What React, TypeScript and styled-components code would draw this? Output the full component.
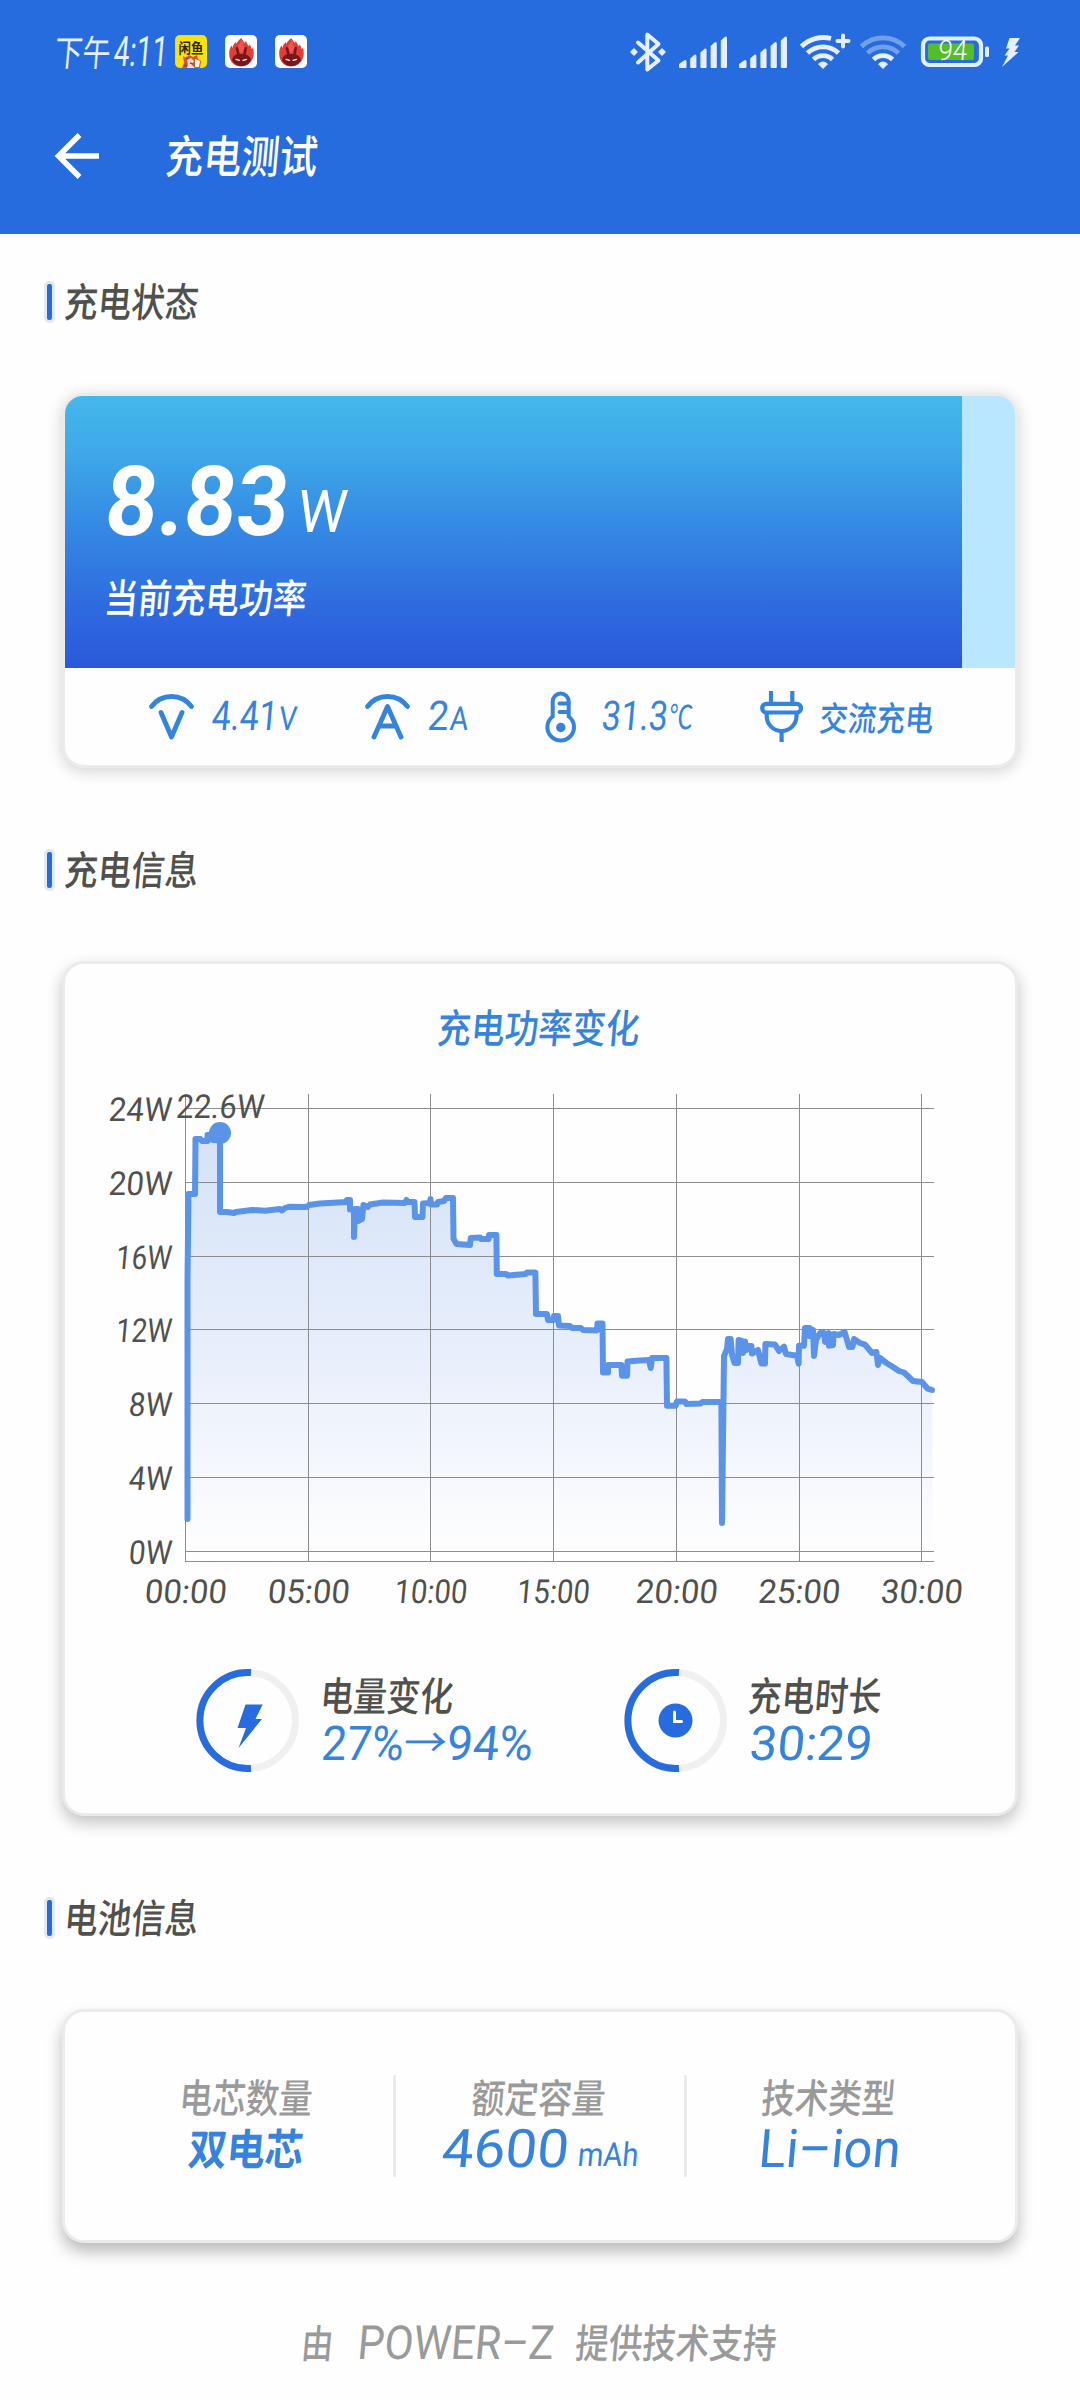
import React, { useLayoutEffect, useRef, useState } from "react";
import styled, { createGlobalStyle } from "styled-components";

const BLUE = "#266cdf";
const ACCENT = "#3683de";
const DARK = "#50514d";
const GREY = "#9a9a9a";
const LINE = "#5b93e9";
const FONT = `Roboto, "Noto Sans CJK SC", sans-serif`;

const GlobalStyle = createGlobalStyle`
  * { box-sizing: border-box; }
  html, body { margin: 0; padding: 0; background: #fefefe; }
  body { font-family: ${FONT}; }
  svg { display: block; flex: none; overflow: visible; }
`;

/* Condensed, slightly slanted lettering stretched to a set width. */
const FitBox = styled.span<{ $w: number; $h: number }>`
  display: flex;
  flex: none;
  width: ${(p) => p.$w}px;
  height: ${(p) => p.$h}px;
`;
const FitInner = styled.span<{ $h: number; $size: number; $weight: number; $color: string }>`
  flex: none;
  white-space: nowrap;
  transform-origin: left center;
  line-height: ${(p) => p.$h}px;
  font-size: ${(p) => p.$size}px;
  font-weight: ${(p) => p.$weight};
  color: ${(p) => p.$color};
`;

type FitProps = { text: string; w: number; h: number; size: number; weight?: number; color: string };

function Fit({ text, w, h, size, weight = 400, color }: FitProps) {
  const ref = useRef<HTMLSpanElement>(null);
  const [k, setK] = useState(1);
  useLayoutEffect(() => {
    if (ref.current) setK(w / ref.current.offsetWidth);
  }, [w, text]);
  const shift = /[\u4e00-\u9fff]/.test(text) ? "translate(-1.5px, 1.5px) " : "";
  return (
    <FitBox $w={w} $h={h}>
      <FitInner
        ref={ref}
        $h={h}
        $size={size}
        $weight={weight}
        $color={color}
        style={{ transform: `${shift}skewX(-5deg) scaleX(${k})` }}
      >
        {text}
      </FitInner>
    </FitBox>
  );
}

const Page = styled.div`
  width: 1080px;
  height: 2400px;
  background: #fefefe;
  overflow: hidden;
`;
const Header = styled.header`
  height: 234px;
  background: ${BLUE};
`;
const StatusBar = styled.div`
  display: flex;
  align-items: center;
  height: 103px;
  padding: 0 60px 0 56px;
`;
const Clock = styled.div`
  display: flex;
  align-items: center;
  gap: 2px;
  width: 119px;
`;
const AppIcons = styled.div`
  display: flex;
  gap: 18px;
`;
const Indicators = styled.div`
  display: flex;
  align-items: center;
  gap: 12px;
  margin-left: auto;
`;
const TitleBar = styled.div`
  display: flex;
  align-items: center;
  gap: 67px;
  height: 106px;
  padding-left: 55px;
`;

const Content = styled.main`
  display: flex;
  flex-direction: column;
`;
const SectionHead = styled.div<{ $top: number }>`
  display: flex;
  align-items: center;
  gap: 11px;
  height: 42px;
  margin: ${(p) => p.$top}px 0 70px 44px;
`;
const Marker = styled.i`
  width: 11px;
  height: 42px;
  border: 3px solid #e4e8ef;
  border-radius: 5px;
  background: ${BLUE};
`;
const Card = styled.section<{ $h: number; $depth: number }>`
  width: 956px;
  height: ${(p) => p.$h}px;
  margin-left: 62px;
  border: 3px solid #ebebeb;
  border-radius: 22px;
  background: #fefefe;
  box-shadow: 0 ${(p) => p.$depth}px 16px rgba(0, 0, 0, ${(p) => 0.14 + p.$depth * 0.014});
`;

const Level = styled.div`
  height: 272px;
  border-radius: 18px 18px 0 0;
  background: #b8e7ff;
  overflow: hidden;
`;
const LevelFill = styled.div`
  display: flex;
  flex-direction: column;
  width: 897px;
  height: 272px;
  padding: 71px 0 0 41px;
  background: linear-gradient(#44b8ec 0%, #3fa9e9 20%, #3487e3 50%, #2e6bdf 77%, #2b58db 100%);
`;
const Power = styled.div`
  display: flex;
  align-items: flex-end;
  gap: 9px;
  height: 70px;
  margin-bottom: 37px;
`;
const PowerUnit = styled.div`
  padding-bottom: 4px;
`;
const Metrics = styled.div`
  display: grid;
  grid-template-columns: 216px 180px 215px 1fr;
  align-items: center;
  height: 97px;
  padding: 0 0 0 84px;
`;
const Metric = styled.div<{ $gap: number }>`
  display: flex;
  align-items: center;
  gap: ${(p) => p.$gap}px;
`;
const Reading = styled.div`
  display: flex;
  align-items: flex-end;
  gap: 1px;
`;

const ChartTitle = styled.div`
  display: flex;
  justify-content: center;
  padding-top: 40px;
  margin-bottom: 8px;
`;
const Stats = styled.div`
  display: grid;
  grid-template-columns: 428px 1fr;
  padding: 49px 0 0 131px;
`;
const Stat = styled.div`
  display: flex;
  gap: 23px;
`;
const Stack = styled.div`
  display: flex;
  flex-direction: column;
  padding-top: 3px;
`;
const ValueSlot = styled.div`
  display: flex;
  align-items: center;
  height: 48px;
`;

const Specs = styled.div`
  display: grid;
  grid-template-columns: 295px 291px 286px;
  padding: 63px 0 0 36px;
`;
const Spec = styled.div<{ $last?: boolean }>`
  display: flex;
  flex-direction: column;
  align-items: center;
  height: 102px;
  border-right: ${(p) => (p.$last ? "none" : "3px solid #ebebeb")};
`;
const SpecValue = styled.div`
  display: flex;
  align-items: flex-end;
  gap: 9px;
  height: 42px;
  margin-top: 6px;
  padding-bottom: 1px;
`;
const Footer = styled.footer`
  display: flex;
  justify-content: center;
  align-items: center;
  gap: 23px;
  height: 50px;
  margin-top: 75px;
`;

const FishIcon = () => (
  <svg width="32" height="33" viewBox="0 0 32 33">
    <rect width="32" height="33" rx="5" fill="#fbe20f" />
    <text x="3.5" y="17.5" fontSize="13.5" fontWeight="700" textLength="25" lengthAdjust="spacingAndGlyphs" fill="#2a2410">闲鱼</text>
    <path d="M8 21l3 2 3-3 4 2 4-2 1 4 3 2-1 7H7l2-5z" fill="#d9542b" />
    <path d="M12 25l4-2 3 3-2 4 3 3h-8l1-4z" fill="#f7dcc0" />
    <path d="M20 24l5 2-1 6h-4z" fill="#fff7e8" />
    <path d="M11 22l2 2M15 28l3 1M9 30l3 1" stroke="#713fa0" strokeWidth="1.4" />
  </svg>
);

const FlameIcon = () => (
  <svg width="32" height="33" viewBox="0 0 32 33">
    <rect width="32" height="33" rx="5" fill="#fff" />
    <path d="M4.200 19C4 15 5 13 6.500 10.500L7.500 13C8 10 9 8.500 11 7L11.500 9C12.500 6 14 5 16.500 3C17 5 18.500 6 19.500 8L21 6C21.500 8 22.500 9 23.500 11L25 9.500C25.500 11 26 12 26.500 14L28 13C30 20 28 26 23 29.500C18 32.500 12 32 8 28.500C5.500 26 4.300 23 4.200 19Z" fill="#df3e39" />
    <path d="M13 11L17 5L19 13L17 18L14 17Z" fill="#f0574c" />
    <path d="M7 25C8 21 10.500 19.500 12 19.300L10.500 13C11 11.500 12.500 11.500 13.300 13L14.800 19H18.200L19.500 13C20.300 11.500 22 11.500 22 13L20.800 19.400C23.500 20 25.500 22 26 25C24 29.500 20 31 16.500 31C13 31 9 29.500 7 25Z" fill="#7a1519" />
    <path d="M11 24.300l3.500 1M21.500 24.300l-3.500 1" stroke="#fff" strokeWidth="1.300" strokeLinecap="round" />
  </svg>
);

const PALE = "#e6effd";

const BluetoothIcon = () => (
  <svg width="37" height="40" viewBox="0 0 37 40" fill="none" stroke={PALE} strokeWidth="4" strokeLinejoin="round" strokeLinecap="round">
    <path d="M8 10.500L28.500 28.500L17.300 37.500V2.500L28.500 12L8 30.500" />
    <path d="M4 17l3 3-3 3-3-3zM32 17l3 3-3 3-3-3z" fill={PALE} strokeWidth="1.500" />
  </svg>
);

const SignalIcon = ({ box }: { box: number }) => (
  <svg width={box} height="32" viewBox={`0 0 ${box} 32`} fill={PALE}>
    {[8, 13.500, 19.500, 26, 31.500].map((h, i) => {
      const x = i === 0 ? 0 : 1 + i * 10.200;
      const w = i === 0 ? 7.500 : 6.200;
      const y = 32 - h;
      return <path key={i} d={`M${x} ${y + 4}L${x + w - 2} ${y + 0.300}Q${x + w} ${y - 0.500} ${x + w} ${y + 2}V31Q${x + w} 32 ${x + w - 1} 32H${x + 1}Q${x} 32 ${x} 31Z`} />;
    })}
  </svg>
);

const WifiIcon = ({ plus }: { plus?: boolean }) => (
  <svg width="48" height="35" viewBox="0 0 48 35" fill="none" stroke={PALE} strokeWidth="4.800">
    <path d={plus ? "M1.500 12.500A31 31 0 0 1 31 4.500" : "M1.500 12.500A31 31 0 0 1 44.500 12.500"} opacity={plus ? 1 : 0.4} />
    <path d="M7.500 19A22.500 22.500 0 0 1 38.500 19" opacity={plus ? 1 : 0.4} />
    <path d="M13.500 25.500A13.500 13.500 0 0 1 32.500 25.500" />
    <path d="M18.500 30Q23 26 27.500 30L23 34.500Z" fill={PALE} strokeWidth="1" strokeLinejoin="round" />
    {plus && <path d="M43 1.500V12.500M37.500 7H48.500" strokeWidth="4" strokeLinecap="round" />}
  </svg>
);

const BatteryIcon = () => (
  <svg width="70" height="31" viewBox="0 0 70 31">
    <rect x="3" y="2.500" width="58" height="26.500" rx="6.500" fill="none" stroke="#dff0fb" strokeWidth="4.200" />
    <rect x="8" y="7.500" width="46" height="16.500" rx="2" fill="#53bd2b" />
    <rect x="65" y="10.500" width="4" height="10.500" rx="1.500" fill="#dff0fb" />
    <text transform="translate(17.5 23.5) skewX(-5)" fontSize="28" fontWeight="300" textLength="29" lengthAdjust="spacingAndGlyphs" fill="#fff">94</text>
  </svg>
);

const ChargeIcon = () => (
  <svg width="18" height="30" viewBox="0 0 18 30">
    <path d="M7.500 1H18L13 8.500H17L12.500 15H16.500L0 30L6 18.500H2.500L7.500 11.500H4Z" fill={PALE} />
  </svg>
);

const BackIcon = () => (
  <svg width="45" height="46" viewBox="0 0 45 46" fill="none" stroke="#fff" strokeWidth="5.500">
    <path d="M24.500 2L3.500 23L24.500 44M4 23H44" />
  </svg>
);

const VoltIcon = () => (
  <svg width="45" height="47" viewBox="0 0 45 47" fill="none" stroke={ACCENT} strokeWidth="4.800" strokeLinecap="round" strokeLinejoin="round">
    <path d="M2.500 13.500A25 25 0 0 1 42.500 13.500M12 19.500L22.500 44L33 19.500" />
  </svg>
);

const AmpIcon = () => (
  <svg width="45" height="47" viewBox="0 0 45 47" fill="none" stroke={ACCENT} strokeWidth="4.800" strokeLinecap="round" strokeLinejoin="round">
    <path d="M2.500 13.500A25 25 0 0 1 42.500 13.500M9 44L22.500 13.500L36 44M14 33H31" />
  </svg>
);

const ThermoIcon = () => (
  <svg width="40" height="52" viewBox="0 0 40 52" fill="none" stroke={ACCENT} strokeWidth="4" strokeLinecap="round">
    <path d="M7.700 25.500V10.500A8 8 0 0 1 23.700 10.500V25.500A13.300 13.300 0 1 1 7.700 25.500ZM14.500 12.500H22M14.500 21H22" />
    <circle cx="15.800" cy="36.500" r="4.700" fill={ACCENT} stroke="none" />
  </svg>
);

const PlugIcon = () => (
  <svg width="44" height="52" viewBox="0 0 44 52" fill="none" stroke={ACCENT} strokeWidth="4.200">
    <path d="M11 0V12M32.300 0V12M21.600 40V51" />
    <rect x="2.200" y="12.800" width="38.800" height="8.700" rx="4.350" />
    <path d="M6.700 22V25A14.900 15 0 0 0 36.500 25V22" />
  </svg>
);

const Ring = ({ children }: { children: React.ReactNode }) => (
  <svg width="103" height="103" viewBox="0 0 103 103" fill="none">
    <circle cx="51.500" cy="51.500" r="48" stroke="#eff0f0" strokeWidth="7" />
    <path d="M55 3.600A48 48 0 1 0 55 99.400" stroke={BLUE} strokeWidth="7" />
    {children}
  </svg>
);

const SERIES: [number, number][] = [
  [187.5, 1519], [187.5, 1280], [188.5, 1194], [195, 1194], [195.5, 1139], [200.5, 1139], [202, 1141], [207.5, 1141], [207.5, 1135],
  [213, 1135], [213, 1140], [220, 1140], [220, 1212], [226.7, 1212], [234, 1213], [236, 1212], [252, 1210], [265, 1210.7], [280, 1209],
  [282, 1210.5], [285, 1208], [289, 1206.8], [306.7, 1207], [309, 1205], [320, 1203.5], [347, 1202], [347, 1200], [350, 1200],
  [350, 1209.500], [354, 1209.500], [354, 1237], [355, 1209], [358, 1209], [358, 1221], [362, 1219], [363.5, 1205], [368, 1207], [370, 1204.500],
  [383, 1202.500], [405, 1203], [406.5, 1200], [408, 1202], [414.500, 1202], [415, 1217], [422.500, 1217], [423, 1203.500], [430, 1203],
  [430.500, 1199], [431, 1204.600], [437, 1204.600], [438, 1202], [444, 1201], [446, 1198], [453, 1198], [453.500, 1238.600], [456.500, 1244],
  [470, 1245], [470.700, 1238], [480, 1237.500], [481, 1239], [488.600, 1239], [489, 1235], [496.400, 1235], [496.800, 1274], [506, 1274],
  [508, 1275.500], [525.700, 1274], [527, 1272.500], [535.400, 1272.500], [536, 1314], [547, 1314], [548, 1320], [553.600, 1320], [554, 1316],
  [558, 1316], [559, 1325.500], [570, 1326], [572, 1328], [581, 1328], [583, 1330], [597, 1330.400], [597.500, 1323.600], [602.500, 1323.600],
  [603, 1372.500], [608, 1372.500], [608, 1365], [621.400, 1365], [622, 1375.700], [627, 1375.700], [627.500, 1361.400], [636, 1360.700],
  [649, 1360], [650.700, 1368], [652, 1358], [666.400, 1358], [667, 1405.700], [675.700, 1405.700], [677, 1401.400], [685, 1401.400],
  [686.400, 1404], [700.700, 1403.600], [702.500, 1402], [721.400, 1402], [722, 1523], [724, 1356], [727, 1349], [728, 1339], [730.700, 1339],
  [732, 1354.600], [734.600, 1363], [738, 1363], [738.600, 1340], [742, 1341], [743, 1353], [745, 1341.500], [746.500, 1350], [748, 1346],
  [751.400, 1346], [752, 1353.600], [758, 1350], [761.400, 1363.600], [765, 1363.600], [765.400, 1344], [775, 1344.600], [779, 1351],
  [784, 1346.800], [786, 1354], [797, 1355.700], [798.600, 1363.600], [799, 1345.700], [804, 1345.700], [805, 1328], [809.600, 1328],
  [810, 1336], [813, 1330], [814, 1356], [816, 1340], [820, 1333], [824, 1333], [825, 1342], [828.600, 1333], [829, 1345.700], [833, 1345],
  [833.600, 1334], [839, 1335], [844.600, 1332], [846.400, 1338], [849, 1347], [852.500, 1347], [854, 1339], [860, 1343], [865, 1344.600],
  [872, 1353], [876.400, 1352], [878, 1365], [880, 1358], [886.500, 1363], [893, 1367], [899, 1371], [904, 1372.500], [913, 1381],
  [922, 1382], [927.500, 1388.600], [932, 1390],
];
const ROWS = [24, 20, 16, 12, 8, 4, 0];
const COLS = [185.5, 308.5, 430.5, 553, 676.5, 799, 921.5];
const TIMES = ["00:00", "05:00", "10:00", "15:00", "20:00", "25:00", "30:00"];

function PowerChart() {
  const pts = SERIES.map(([x, y]) => `${x},${y}`).join(" ");
  return (
    <svg width="950" height="560" viewBox="65 1060 950 560">
      <defs>
        <linearGradient id="area" x1="0" x2="0" y1="1133" y2="1553" gradientUnits="userSpaceOnUse">
          <stop offset="0" stopColor="#d4e2f8" />
          <stop offset="0.5" stopColor="#e7eefb" />
          <stop offset="1" stopColor="#fefefe" />
        </linearGradient>
      </defs>
      <polygon points={`187,1552 ${pts} 933,1552`} fill="url(#area)" />
      <g stroke="#8b8d90" strokeWidth="1">
        {ROWS.map((v) => {
          const y = Math.round(1551 - v * 18.46) + 0.5;
          return <line key={v} x1="185" x2="934" y1={y} y2={y} />;
        })}
        <line x1="185" x2="934" y1="1561.5" y2="1561.5" />
        {COLS.map((x) => (
          <line key={x} x1={Math.floor(x) + 0.5} x2={Math.floor(x) + 0.5} y1="1094" y2="1562" />
        ))}
      </g>
      <polyline points={pts} fill="none" stroke={LINE} strokeWidth="6" strokeLinejoin="round" strokeLinecap="round" />
      <circle cx="220" cy="1133" r="11" fill={LINE} />
      <g fill={DARK} fontSize="33" fontWeight="400">
        {ROWS.map((v) => {
          const w = v >= 20 ? 63 : v >= 10 ? 56 : 43;
          return (
            <text key={v} transform={`translate(${171 - w} ${1564 - v * 18.46}) skewX(-5)`} textLength={w} lengthAdjust="spacingAndGlyphs">
              {`${v}W`}
            </text>
          );
        })}
        {COLS.map((x, i) => {
          const w = i === 2 || i === 3 ? 73 : 82;
          return (
            <text key={x} transform={`translate(${x - w / 2 - 0.5} 1603) skewX(-5)`} textLength={w} lengthAdjust="spacingAndGlyphs">
              {TIMES[i]}
            </text>
          );
        })}
        <text transform="translate(175.500 1118) skewX(-5)" textLength="88" lengthAdjust="spacingAndGlyphs">22.6W</text>
      </g>
    </svg>
  );
}

const Heading = ({ text, top = 81 }: { text: string; top?: number }) => (
  <SectionHead $top={top}>
    <Marker />
    <Fit text={text} w={134} h={42} size={40} weight={500} color={DARK} />
  </SectionHead>
);

export default function App() {
  return (
    <Page>
      <GlobalStyle />
      <Header>
        <StatusBar>
          <Clock>
            <Fit text="下午" w={56} h={34} size={36} color={PALE} />
            <Fit text="4:11" w={54} h={36} size={42} color={PALE} />
          </Clock>
          <AppIcons>
            <FishIcon />
            <FlameIcon />
            <FlameIcon />
          </AppIcons>
          <Indicators>
            <BluetoothIcon />
            <SignalIcon box={48} />
            <SignalIcon box={49} />
            <WifiIcon plus />
            <WifiIcon />
            <BatteryIcon />
            <ChargeIcon />
          </Indicators>
        </StatusBar>
        <TitleBar>
          <BackIcon />
          <Fit text="充电测试" w={152} h={48} size={45} weight={500} color="#fff" />
        </TitleBar>
      </Header>
      <Content>
        <Heading text="充电状态" top={47} />
        <Card $h={375} $depth={3}>
          <Level>
            <LevelFill>
              <Power>
                <Fit text="8.83" w={183} h={70} size={97} weight={700} color="#fff" />
                <PowerUnit>
                  <Fit text="W" w={49} h={42} size={59} color="#fff" />
                </PowerUnit>
              </Power>
              <Fit text="当前充电功率" w={202} h={48} size={40} weight={500} color="#fff" />
            </LevelFill>
          </Level>
          <Metrics>
            <Metric $gap={18}>
              <VoltIcon />
              <Reading>
                <Fit text="4.41" w={66} h={29} size={41} color={ACCENT} />
                <Fit text="V" w={18} h={24} size={33} color={ACCENT} />
              </Reading>
            </Metric>
            <Metric $gap={18}>
              <AmpIcon />
              <Reading>
                <Fit text="2" w={21} h={29} size={41} color={ACCENT} />
                <Fit text="A" w={19} h={24} size={33} color={ACCENT} />
              </Reading>
            </Metric>
            <Metric $gap={17}>
              <ThermoIcon />
              <Reading>
                <Fit text="31.3" w={66} h={29} size={41} color={ACCENT} />
                <Fit text="℃" w={24} h={26} size={33} color={ACCENT} />
              </Reading>
            </Metric>
            <Metric $gap={17}>
              <PlugIcon />
              <Fit text="交流充电" w={114} h={32} size={34} weight={500} color={ACCENT} />
            </Metric>
          </Metrics>
        </Card>

        <Heading text="充电信息" />
        <Card $h={855} $depth={7}>
          <ChartTitle>
            <Fit text="充电功率变化" w={202} h={48} size={40} weight={500} color={ACCENT} />
          </ChartTitle>
          <PowerChart />
          <Stats>
            <Stat>
              <Ring>
                <path d="M49.500 35.500H66.700L59.500 50H66L42.500 79L50 59H41.500Z" fill={BLUE} />
              </Ring>
              <Stack>
                <Fit text="电量变化" w={133} h={48} size={40} weight={500} color={DARK} />
                <ValueSlot>
                  <Fit text="27%" w={82} h={34} size={48} color={ACCENT} />
                  <Fit text="→" w={43} h={34} size={40} color={ACCENT} />
                  <Fit text="94%" w={86} h={34} size={48} color={ACCENT} />
                </ValueSlot>
              </Stack>
            </Stat>
            <Stat>
              <Ring>
                <circle cx="51.500" cy="51.500" r="17" fill={BLUE} />
                <path d="M50.500 43V52.500H57.500" stroke="#fff" strokeWidth="3" strokeLinecap="round" />
              </Ring>
              <Stack>
                <Fit text="充电时长" w={133} h={48} size={40} weight={500} color={DARK} />
                <ValueSlot>
                  <Fit text="30:29" w={123} h={34} size={48} color={ACCENT} />
                </ValueSlot>
              </Stack>
            </Stat>
          </Stats>
        </Card>

        <Heading text="电池信息" />
        <Card $h={234} $depth={9}>
          <Specs>
            <Spec>
              <Fit text="电芯数量" w={133} h={46} size={40} weight={500} color={GREY} />
              <SpecValue>
                <Fit text="双电芯" w={115} h={40} size={43} weight={700} color={ACCENT} />
              </SpecValue>
            </Spec>
            <Spec>
              <Fit text="额定容量" w={134} h={46} size={40} weight={500} color={GREY} />
              <SpecValue>
                <Fit text="4600" w={127} h={38} size={53} color={ACCENT} />
                <Fit text="mAh" w={61} h={27} size={33} color={ACCENT} />
              </SpecValue>
            </Spec>
            <Spec $last>
              <Fit text="技术类型" w={134} h={46} size={40} weight={500} color={GREY} />
              <SpecValue>
                <Fit text="Li–ion" w={142} h={38} size={53} color={ACCENT} />
              </SpecValue>
            </Spec>
          </Specs>
        </Card>

        <Footer>
          <Fit text="由" w={32} h={40} size={39} weight={500} color={GREY} />
          <Fit text="POWER–Z" w={196} h={42} size={47} color={GREY} />
          <Fit text="提供技术支持" w={201} h={40} size={40} weight={500} color={GREY} />
        </Footer>
      </Content>
    </Page>
  );
}
